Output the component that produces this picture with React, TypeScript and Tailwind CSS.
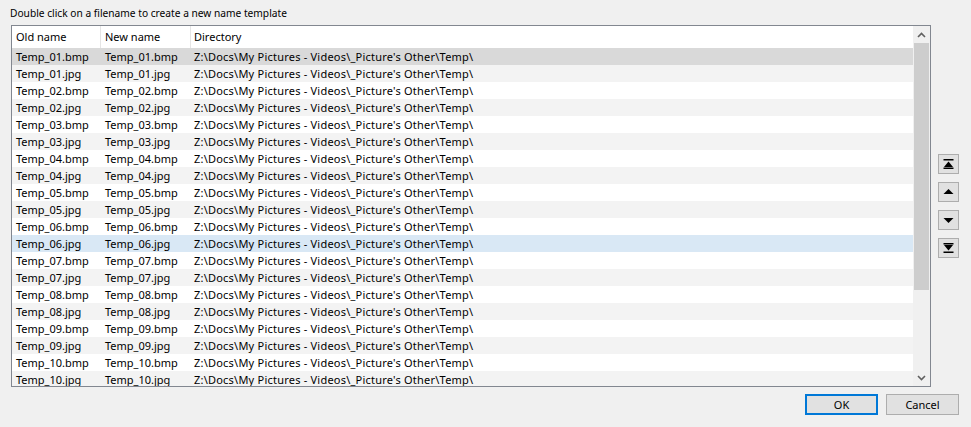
import React from "react";

const DIR = "Z:\\Docs\\My Pictures - Videos\\_Picture's Other\\Temp\\";

const rows: string[] = [];
for (let i = 1; i <= 10; i++) {
  const n = String(i).padStart(2, "0");
  rows.push(`Temp_${n}.bmp`, `Temp_${n}.jpg`);
}

function rowBg(i: number) {
  if (i === 0) return "bg-[#d9d9d9]";
  if (i === 11) return "bg-[#d9e8f5]";
  return i % 2 === 1 ? "bg-[#f3f3f3]" : "bg-white";
}

function MoveButton({ children }: { children: React.ReactNode }) {
  return (
    <button className="flex h-[20px] w-[21px] items-center justify-center border border-[#adadad] bg-[#e1e1e1]">
      <svg width="11" height="10" viewBox="0 0 11 10" fill="#000">
        {children}
      </svg>
    </button>
  );
}

export default function App() {
  return (
    <div
      className="flex h-[427px] w-[971px] flex-col bg-[#f0f0f0] text-[11px] text-black"
      style={{ fontFamily: '"Noto Sans", "Segoe UI", sans-serif' }}
    >
      <div className="h-[25px] pl-[10px] pt-[6px] text-[10.2px] leading-[14px]">
        Double click on a filename to create a new name template
      </div>

      <div className="flex items-center">
        <div className="ml-[11px] flex h-[362px] w-[920px] border border-[#828790] bg-white">
          <div className="flex min-w-0 flex-1 flex-col overflow-hidden">
            <div className="flex h-[22px] shrink-0 items-center">
              <div className="w-[89px] border-r border-[#e5e5e5] pl-[4px] leading-[22px]">Old name</div>
              <div className="w-[90px] border-r border-[#e5e5e5] pl-[4px] leading-[22px]">New name</div>
              <div className="pl-[3px] leading-[22px]">Directory</div>
            </div>
            {rows.map((name, i) => (
              <div key={name} className={`flex h-[17px] shrink-0 items-center leading-[17px] ${rowBg(i)}`}>
                <div className="w-[89px] pl-[4px]">{name}</div>
                <div className="w-[89px] pl-[4px]">{name}</div>
                <div className="whitespace-nowrap pl-[4px] tracking-[0.22px]">{DIR}</div>
              </div>
            ))}
          </div>
          <div className="flex w-[17px] shrink-0 flex-col bg-[#f0f0f0]">
            <div className="flex h-[17px] items-center justify-center">
              <svg width="9" height="6" viewBox="0 0 9 6">
                <path d="M1 5 L4.5 1.5 L8 5" fill="none" stroke="#606060" strokeWidth="1.6" />
              </svg>
            </div>
            <div className="mx-[1px] h-[247px] bg-[#cdcdcd]" />
            <div className="flex-1" />
            <div className="flex h-[17px] items-center justify-center">
              <svg width="9" height="6" viewBox="0 0 9 6">
                <path d="M1 1 L4.5 4.5 L8 1" fill="none" stroke="#606060" strokeWidth="1.6" />
              </svg>
            </div>
          </div>
        </div>

        <div className="ml-[7px] flex flex-col gap-[8px]">
          <MoveButton>
            <rect x="0.5" y="0" width="10" height="1.5" />
            <path d="M5.5 2.5 L10 8 L1 8 Z" />
            <rect x="0.5" y="8.5" width="10" height="1.5" />
          </MoveButton>
          <MoveButton>
            <path d="M5.5 2 L10.5 7 L0.5 7 Z" />
          </MoveButton>
          <MoveButton>
            <path d="M0.5 3 L10.5 3 L5.5 8 Z" />
          </MoveButton>
          <MoveButton>
            <rect x="0.5" y="0" width="10" height="1.5" />
            <path d="M1 2 L10 2 L5.5 7.5 Z" />
            <rect x="0.5" y="8.5" width="10" height="1.5" />
          </MoveButton>
        </div>
      </div>

      <div className="mt-[7px] flex justify-end gap-[8px] pr-[12px]">
        <button className="h-[21px] w-[73px] border-2 border-[#0078d7] bg-[#e1e1e1] text-[11px] leading-[17px]">OK</button>
        <button className="h-[21px] w-[73px] border border-[#adadad] bg-[#e1e1e1] text-[11px] leading-[19px]">Cancel</button>
      </div>
    </div>
  );
}
